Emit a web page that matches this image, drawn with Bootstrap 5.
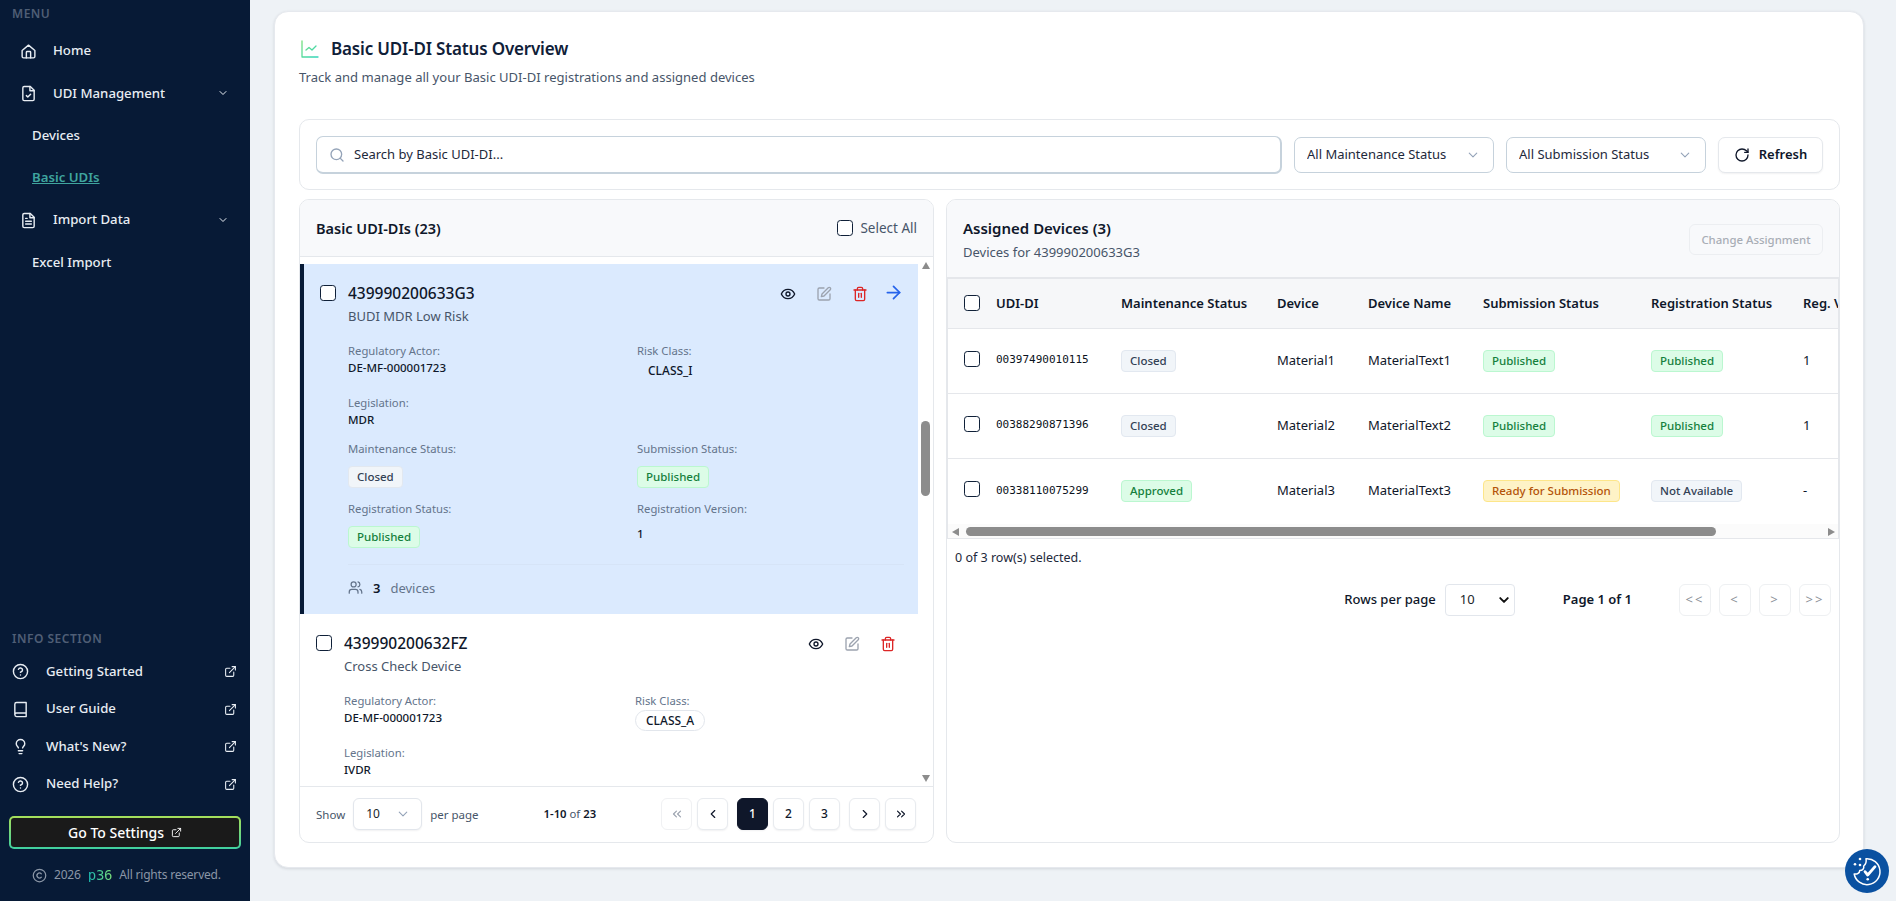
<!DOCTYPE html>
<html lang="en">
<head>
<meta charset="utf-8">
<title>Basic UDI-DI Status Overview</title>
<link href="https://cdn.jsdelivr.net/npm/bootstrap@5.3.0/dist/css/bootstrap.min.css" rel="stylesheet">
<style>
html,body{height:901px;overflow:hidden}
body{font-family:"Noto Sans","Open Sans",sans-serif;background:#eef2f6;color:#0f172a;font-size:13px}
svg.ic{fill:none;stroke:currentColor;stroke-width:2;stroke-linecap:round;stroke-linejoin:round;flex:none}
.app-shell{height:901px}
.side-bar{width:250px;background:#071a36;color:#e8edf3;flex:none}
.side-label{font-size:12px;font-weight:600;letter-spacing:.5px;color:#4f5e75;padding-left:12px;line-height:26px;height:26px}
.menu-label{margin-top:1px}
.side-menu{margin-top:3px}
.side-row{height:42.3px;padding:0 21px 0 20px;gap:16px;color:#e8edf3;text-decoration:none;font-size:13.2px;font-weight:500}
.side-sub{padding-left:32px}
.side-active{color:#3fa59f;text-decoration:underline;font-weight:600}
.side-chev{margin-left:auto}
.info-list{margin-top:1px}
.info-row{height:37.6px;padding:0 13px 0 12px;gap:17px;color:#e8edf3;text-decoration:none;font-size:13.2px;font-weight:500}
.info-ext{margin-left:auto}
.set-btn{margin:13px 9px 0;width:232px;height:33px;border-radius:5px;border:2px solid transparent;background:linear-gradient(#1a1a1a,#1a1a1a) padding-box,linear-gradient(0deg,#3fd0a0,#a6e05a) border-box;color:#fff;font-size:14px;font-weight:500;padding:0;gap:7px}
.side-foot{height:52px;color:#8b96a6;font-size:12px;letter-spacing:-.2px;gap:7px;padding-left:32px}
.logo-txt{font-weight:400;font-size:14px;background:linear-gradient(90deg,#18b5b0,#7be07a);-webkit-background-clip:text;background-clip:text;color:transparent;font-family:"DejaVu Sans Mono",monospace;line-height:1}
.main-area{padding:11px 32px 0 24px;min-width:0}
.page-card{height:857px;border:1px solid #e6e9ee;border-radius:14px;padding:0 23px 0 24px;box-shadow:0 1px 3px rgba(15,23,42,.12)}
.page-head{height:107px;padding-top:25px}
.page-title{font-size:17px;font-weight:600;letter-spacing:-.17px;line-height:24px;margin:0;gap:12px;color:#0f2038}
.page-sub{font-size:13.05px;line-height:20px;margin-top:6px;color:#475569}
.chart-ic{margin-left:2px}
.filter-card{height:71px;border:1px solid #e5e8ec;border-radius:10px;padding:0 16px;gap:12px;background:#fff}
.search-box{flex:1}
.search-input{height:38px;border:1px solid #c6d2dc;border-width:1px 2px 2px 1px;border-radius:7px;padding-left:37px;font-size:13px;color:#0f172a}
.search-input::placeholder{color:#1e293b;opacity:1}
.search-ic{left:13px;top:11px;color:#94a3b8}
.flt-select{height:36px;border:1px solid #c6d2dc;border-radius:7px;font-size:13px;width:200px;padding:0 0 0 12px;color:#1e293b;--bs-form-select-bg-img:url("data:image/svg+xml,%3csvg xmlns='http://www.w3.org/2000/svg' viewBox='0 0 16 16'%3e%3cpath fill='none' stroke='%2394a3b8' stroke-width='1.5' stroke-linecap='round' stroke-linejoin='round' d='m3 5.5 5 5 5-5'/%3e%3c/svg%3e");background-position:right 12px center}
.refresh-btn{width:105px;height:36px;border:1px solid #e5e8ec;border-radius:7px;font-size:13px;font-weight:600;gap:9px;color:#0f172a;padding:0;box-shadow:0 1px 2px rgba(15,23,42,.06)}
.panes{margin-top:9px;height:644px;gap:12px}
.pane-card{border:1px solid #e5e8ec;border-radius:10px;overflow:hidden;background:#fff}
.pane-left{width:635px;flex:none}
.pane-right{flex:1;min-width:0}
.left-head{height:58px;background:#f8f9fb;border-bottom:1px solid #e5e8ec;padding:0 16px}
.pane-title{font-size:14.5px;font-weight:600;margin:1px 0 0;color:#0f172a}
.sel-all{gap:7px;color:#475569;font-size:13.5px}
.chk{width:16px;height:16px;margin:0;border:1.3px solid #0f2038;border-radius:4px;flex:none}
.list-zone{height:529px}
.list-items{flex:1;min-width:0;padding-top:7px;overflow:hidden}
.udi-item{padding:17px 12px 0 16px;background:#fff}
.udi-selected{height:350px;background:#dbeafe;border-left:4px solid #071a36;padding-right:9px}
.udi-id{font-size:15.5px;font-weight:500;line-height:24px;color:#0f172a;margin-left:12px}
.udi-top{height:24px}
.udi-name{font-size:13px;line-height:18px;margin:2px 0 0 28px;color:#475569}
.detail-grid{display:grid;grid-template-columns:289px 1fr;grid-template-rows:52px 46px 60px 47px;margin:18px 0 0 28px}
.grid-wide{grid-template-columns:291px 1fr}
.lbl{font-size:11.3px;line-height:16px;color:#64748b}
.val{font-size:11.5px;line-height:18px;font-weight:500;color:#0f172a}
.pill-risk{display:inline-block;height:21px;line-height:19px;border-radius:11px;border:1px solid #e2e6ec;padding:0 10px;font-size:12px;font-weight:500;margin-top:1px;color:#0f172a}
.pill-soft{border-color:transparent}
.pill-white{background:#fff}
.st{display:inline-block;height:22px;line-height:20px;padding:0 8px;font-size:11.5px;font-weight:500;border-radius:4px;border:1px solid;white-space:nowrap}
.st-top{margin-top:9px}
.st-green{background:#dcfce7;border-color:#bbf7d0;color:#15803d}
.st-grey{background:#f1f5f9;border-color:#e2e8f0;color:#334155}
.st-amber{background:#fef3c7;border-color:#fde68a;color:#b45309}
.item-rule{border-top:1px solid #d6e4f7;margin:16px 5px 0 28px;height:0}
.dev-line{margin:13px 0 0 28px;font-size:13px;color:#64748b;gap:10px;line-height:20px}
.dev-num{color:#0f172a;font-weight:600}
.act-btn{width:36px;height:24px;background:none;border:0;padding:0;color:#0f172a}
.act-arrow{width:31px}
.act-edit{color:#9ca3af}
.act-del{color:#dc2626}
.act-go{color:#2563eb}
.v-scroll{width:15px;background:#fff;flex:none;height:529px}
.sb-up,.sb-down{width:0;height:0;border-left:4.5px solid transparent;border-right:4.5px solid transparent;margin:0 auto}
.sb-up{border-bottom:7px solid #8c8c8c;margin-top:5px}
.sb-down{border-top:7px solid #8c8c8c;margin-bottom:4px}
.v-track{flex:1;padding-top:152px}
.v-thumb{width:9px;height:75px;background:#8c8c8c;border-radius:5px;margin:0 auto}
.left-foot{height:57px;border-top:1px solid #e5e8ec;padding:0 17px 0 16px;font-size:11.5px;color:#475569}
.per-select{width:69px;height:32px;margin:0 8px;border:1px solid #e2e6ec;border-radius:6px;padding:0 0 0 12px;font-size:12px;background-position:right 10px center;--bs-form-select-bg-img:url("data:image/svg+xml,%3csvg xmlns='http://www.w3.org/2000/svg' viewBox='0 0 16 16'%3e%3cpath fill='none' stroke='%2394a3b8' stroke-width='1.5' stroke-linecap='round' stroke-linejoin='round' d='m3 5.5 5 5 5-5'/%3e%3c/svg%3e");box-shadow:0 1px 2px rgba(15,23,42,.06)}
.range-txt{margin-left:65px;color:#475569;font-size:11.3px}
.range-txt b{font-weight:600;color:#0f172a}
.pg-set{margin-left:auto;gap:5px}
.pg-btn{width:31px;height:32px;padding:0;border:1px solid #e8ebef;border-radius:6px;background:#fff;color:#0f172a;font-size:12px;font-weight:500;box-shadow:0 1px 2px rgba(15,23,42,.06)}
.pg-off{color:#9ca3af;box-shadow:none;border-color:#f0f1f3}
.pg-on,.pg-on:hover{background:#0f172a;color:#fff;border-color:#0f172a}
.pg-gap{margin-left:4px}
.right-head{height:79px;background:#f8f9fb;padding:2px 16px 0;border-bottom:2px solid #e5e7eb}
.right-text{margin-top:-3px}
.right-sub{font-size:13px;color:#475569;line-height:20px;margin-top:2px}
.right-title{line-height:24px;font-size:15px}
.btn.chg-btn:disabled{width:134px;height:31px;border:1px solid #eceef1;border-radius:6px;background:#f8f9fb;color:#a8adb5;font-size:11.4px;font-weight:500;padding:0;opacity:1}
.tbl-wrap{height:260px;border-left:2px solid #e5e7eb;border-right:1px solid #e5e7eb;border-bottom:1px solid #e5e7eb;overflow:hidden;margin-left:-1px}
.tbl-clip{height:245px;overflow:hidden}
.dev-table{width:1013px;table-layout:fixed;font-size:13px;color:#0f172a;margin:0;--bs-table-bg:transparent;--bs-table-border-color:#e5e7eb}
.dev-table th,.dev-table td{padding:0;vertical-align:middle;white-space:nowrap}
.dev-table thead th{height:49px;background:#f6f7f9;font-weight:600;font-size:13px}
.dev-table tbody td{height:65px}
.dev-table tbody tr:last-child td{border-bottom:0}
.chk-cell{padding-left:16px!important}
.chk-cell .chk{display:block}
.row-chk{position:relative;top:-2px}
.mono{font-family:"DejaVu Sans Mono",monospace;font-size:11px;color:#0b1220}
.h-scroll{height:15px;background:#fbfbfb;padding:0 3px 0 4px}
.sb-left,.sb-right{width:0;height:0;border-top:4.5px solid transparent;border-bottom:4.5px solid transparent;flex:none}
.sb-left{border-right:7px solid #8c8c8c}
.sb-right{border-left:7px solid #8c8c8c;margin-left:auto}
.h-thumb{width:750px;height:9px;background:#8c8c8c;border-radius:5px;margin-left:7px}
.sel-count{font-size:12.5px;padding:9px 0 0 8px;line-height:20px;color:#1e293b}
.tbl-pager{padding:16px 8px 0 0;font-size:13px;font-weight:500;color:#0f172a}
.rows-select{width:70px;height:32px;margin:0 48px 0 9px;padding:0 0 0 14px;border:1px solid #e2e6ec;border-radius:4px;font-size:13px;background-position:right 4px center;background-size:12px;--bs-form-select-bg-img:url("data:image/svg+xml,%3csvg xmlns='http://www.w3.org/2000/svg' viewBox='0 0 16 16'%3e%3cpath fill='none' stroke='%23111' stroke-width='2.6' stroke-linecap='round' stroke-linejoin='round' d='m3 5.5 5 5 5-5'/%3e%3c/svg%3e")}
.pg-page{margin-right:47px;font-weight:600}
.tbl-pg{gap:8px}
.tbl-pg .pg-btn{width:32px;color:#8b9097;box-shadow:none;border-color:#eef0f2;font-weight:400;font-size:13px;letter-spacing:2px}
.cookie-fab{position:fixed;left:1845px;top:849px;width:44px;height:44px}
</style>
</head>
<body>
<svg width="0" height="0" class="position-absolute">
<defs>
<symbol id="i-home" viewBox="0 0 24 24"><path d="M3 10.5 12 3l9 7.5V19a2 2 0 0 1-2 2H5a2 2 0 0 1-2-2z"/><path d="M9 21v-8a1 1 0 0 1 1-1h4a1 1 0 0 1 1 1v8"/></symbol>
<symbol id="i-filecheck" viewBox="0 0 24 24"><path d="M14.5 2H6a2 2 0 0 0-2 2v16a2 2 0 0 0 2 2h12a2 2 0 0 0 2-2V7.5L14.5 2z"/><path d="M14 2v6h6"/><path d="m9 15 2 2 4-4"/></symbol>
<symbol id="i-filetext" viewBox="0 0 24 24"><path d="M14.5 2H6a2 2 0 0 0-2 2v16a2 2 0 0 0 2 2h12a2 2 0 0 0 2-2V7.5L14.5 2z"/><path d="M14 2v6h6"/><path d="M16 13H8"/><path d="M16 17H8"/><path d="M10 9H8"/></symbol>
<symbol id="i-chev" viewBox="0 0 24 24"><path d="m6 9 6 6 6-6"/></symbol>
<symbol id="i-help" viewBox="0 0 24 24"><circle cx="12" cy="12" r="10"/><path d="M9.09 9a3 3 0 0 1 5.83 1c0 2-3 3-3 3"/><path d="M12 17h.01"/></symbol>
<symbol id="i-ext" viewBox="0 0 24 24"><path d="M18 13v6a2 2 0 0 1-2 2H5a2 2 0 0 1-2-2V8a2 2 0 0 1 2-2h6"/><path d="M15 3h6v6"/><path d="M10 14 21 3"/></symbol>
<symbol id="i-book" viewBox="0 0 24 24"><path d="M4 19.500v-15A2.500 2.500 0 0 1 6.500 2H20v20H6.500a2.500 2.500 0 0 1 0-5H20"/></symbol>
<symbol id="i-bulb" viewBox="0 0 24 24"><path d="M15 14c.2-1 .7-1.700 1.500-2.500 1-.9 1.500-2.200 1.500-3.500A6 6 0 0 0 6 8c0 1 .2 2.200 1.500 3.500.7.7 1.300 1.500 1.500 2.500"/><path d="M9 18h6"/><path d="M10 22h4"/></symbol>
<symbol id="i-copy" viewBox="0 0 24 24"><circle cx="12" cy="12" r="10"/><path d="M14.830 14.830a4 4 0 1 1 0-5.660"/></symbol>
<symbol id="i-search" viewBox="0 0 24 24"><circle cx="11" cy="11" r="8"/><path d="m21 21-4.300-4.300"/></symbol>
<symbol id="i-refresh" viewBox="0 0 24 24"><path d="M21 12a9 9 0 1 1-9-9c2.520 0 4.930 1 6.740 2.740L21 8"/><path d="M21 3v5h-5"/></symbol>
<symbol id="i-eye" viewBox="0 0 24 24"><path d="M2 12s3-7 10-7 10 7 10 7-3 7-10 7-10-7-10-7Z"/><circle cx="12" cy="12" r="3"/></symbol>
<symbol id="i-edit" viewBox="0 0 24 24"><path d="M12 3H5a2 2 0 0 0-2 2v14a2 2 0 0 0 2 2h14a2 2 0 0 0 2-2v-7"/><path d="M18.375 2.625a2.121 2.121 0 1 1 3 3L12 15l-4 1 1-4Z"/></symbol>
<symbol id="i-trash" viewBox="0 0 24 24"><path d="M3 6h18"/><path d="M19 6v14c0 1-1 2-2 2H7c-1 0-2-1-2-2V6"/><path d="M8 6V4c0-1 1-2 2-2h4c1 0 2 1 2 2v2"/><path d="M10 11v6"/><path d="M14 11v6"/></symbol>
<symbol id="i-arrow" viewBox="0 0 24 24"><path d="M5 12h14"/><path d="m12 5 7 7-7 7"/></symbol>
<symbol id="i-users" viewBox="0 0 24 24"><path d="M16 21v-2a4 4 0 0 0-4-4H6a4 4 0 0 0-4 4v2"/><circle cx="9" cy="7" r="4"/><path d="M22 21v-2a4 4 0 0 0-3-3.870"/><path d="M16 3.130a4 4 0 0 1 0 7.750"/></symbol>
<symbol id="i-dl" viewBox="0 0 24 24"><path d="m11 17-5-5 5-5"/><path d="m18 17-5-5 5-5"/></symbol>
<symbol id="i-dr" viewBox="0 0 24 24"><path d="m6 17 5-5-5-5"/><path d="m13 17 5-5-5-5"/></symbol>
<symbol id="i-l" viewBox="0 0 24 24"><path d="m15 18-6-6 6-6"/></symbol>
<symbol id="i-r" viewBox="0 0 24 24"><path d="m9 18 6-6-6-6"/></symbol>
<linearGradient id="g-chart" gradientUnits="userSpaceOnUse" x1="0" y1="0" x2="18" y2="18"><stop offset="0" stop-color="#7be07a"/><stop offset="1" stop-color="#2dd4bf"/></linearGradient>
</defs>
</svg>

<div class="app-shell d-flex">
  <aside class="side-bar d-flex flex-column">
    <div class="side-label menu-label">MENU</div>
    <nav class="side-menu d-flex flex-column">
      <a class="side-row d-flex align-items-center" href="#"><svg class="ic" width="17" height="17"><use href="#i-home"/></svg>Home</a>
      <a class="side-row d-flex align-items-center" href="#"><svg class="ic" width="17" height="17"><use href="#i-filecheck"/></svg>UDI Management<svg class="ic side-chev" width="12" height="12"><use href="#i-chev"/></svg></a>
      <a class="side-row side-sub d-flex align-items-center" href="#">Devices</a>
      <a class="side-row side-sub d-flex align-items-center" href="#"><span class="side-active">Basic UDIs</span></a>
      <a class="side-row d-flex align-items-center" href="#"><svg class="ic" width="17" height="17"><use href="#i-filetext"/></svg>Import Data<svg class="ic side-chev" width="12" height="12"><use href="#i-chev"/></svg></a>
      <a class="side-row side-sub d-flex align-items-center" href="#">Excel Import</a>
    </nav>
    <div class="mt-auto">
      <div class="side-label">INFO SECTION</div>
      <div class="info-list">
        <a class="info-row d-flex align-items-center" href="#"><svg class="ic" width="17" height="17"><use href="#i-help"/></svg>Getting Started<svg class="ic info-ext" width="13" height="13"><use href="#i-ext"/></svg></a>
        <a class="info-row d-flex align-items-center" href="#"><svg class="ic" width="17" height="17"><use href="#i-book"/></svg>User Guide<svg class="ic info-ext" width="13" height="13"><use href="#i-ext"/></svg></a>
        <a class="info-row d-flex align-items-center" href="#"><svg class="ic" width="17" height="17"><use href="#i-bulb"/></svg>What's New?<svg class="ic info-ext" width="13" height="13"><use href="#i-ext"/></svg></a>
        <a class="info-row d-flex align-items-center" href="#"><svg class="ic" width="17" height="17"><use href="#i-help"/></svg>Need Help?<svg class="ic info-ext" width="13" height="13"><use href="#i-ext"/></svg></a>
      </div>
      <button class="btn set-btn d-flex align-items-center justify-content-center" type="button">Go To Settings<svg class="ic" width="11" height="11"><use href="#i-ext"/></svg></button>
      <div class="side-foot d-flex align-items-center"><svg class="ic" width="15" height="15"><use href="#i-copy"/></svg><span>2026</span><span class="logo-txt">p36</span><span>All rights reserved.</span></div>
    </div>
  </aside>

  <main class="main-area flex-grow-1">
    <div class="page-card bg-white">
      <header class="page-head">
        <h1 class="page-title d-flex align-items-center"><svg class="chart-ic" width="18" height="18" viewBox="0 0 18 18" fill="none" stroke="url(#g-chart)" stroke-width="1.300" stroke-linecap="round" stroke-linejoin="round"><path d="M1 1v16h16"/><path d="m15 6-4 4-3-2.500-3 2.500"/></svg>Basic UDI-DI Status Overview</h1>
        <p class="page-sub mb-0">Track and manage all your Basic UDI-DI registrations and assigned devices</p>
      </header>

      <section class="filter-card d-flex align-items-center">
        <div class="search-box position-relative">
          <svg class="ic search-ic position-absolute" width="16" height="16"><use href="#i-search"/></svg>
          <input class="form-control search-input" type="text" placeholder="Search by Basic UDI-DI...">
        </div>
        <select class="form-select flt-select"><option>All Maintenance Status</option></select>
        <select class="form-select flt-select"><option>All Submission Status</option></select>
        <button class="btn refresh-btn d-flex align-items-center justify-content-center bg-white" type="button"><svg class="ic" width="16" height="16"><use href="#i-refresh"/></svg>Refresh</button>
      </section>

      <div class="panes d-flex">
        <section class="pane-card pane-left d-flex flex-column">
          <div class="left-head d-flex align-items-center justify-content-between">
            <h2 class="pane-title">Basic UDI-DIs (23)</h2>
            <label class="sel-all d-flex align-items-center"><input class="form-check-input chk" type="checkbox">Select All</label>
          </div>
          <div class="list-zone d-flex">
            <div class="list-items">
              <article class="udi-item udi-selected">
                <div class="udi-top d-flex align-items-center">
                  <input class="form-check-input chk" type="checkbox">
                  <span class="udi-id">439990200633G3</span>
                  <div class="ms-auto d-flex align-items-center">
                    <button class="act-btn" type="button"><svg class="ic" width="16" height="16"><use href="#i-eye"/></svg></button>
                    <button class="act-btn act-edit" type="button"><svg class="ic" width="16" height="16"><use href="#i-edit"/></svg></button>
                    <button class="act-btn act-del" type="button"><svg class="ic" width="16" height="16"><use href="#i-trash"/></svg></button>
                    <button class="act-btn act-arrow act-go" type="button"><svg class="ic" width="21" height="21"><use href="#i-arrow"/></svg></button>
                  </div>
                </div>
                <div class="udi-name">BUDI MDR Low Risk</div>
                <div class="detail-grid">
                  <div><div class="lbl">Regulatory Actor:</div><div class="val">DE-MF-000001723</div></div>
                  <div><div class="lbl">Risk Class:</div><span class="pill-risk pill-soft">CLASS_I</span></div>
                  <div><div class="lbl">Legislation:</div><div class="val">MDR</div></div>
                  <div></div>
                  <div><div class="lbl">Maintenance Status:</div><span class="st st-top st-grey">Closed</span></div>
                  <div><div class="lbl">Submission Status:</div><span class="st st-top st-green">Published</span></div>
                  <div><div class="lbl">Registration Status:</div><span class="st st-top st-green">Published</span></div>
                  <div><div class="lbl">Registration Version:</div><div class="val mt-2">1</div></div>
                </div>
                <div class="item-rule"></div>
                <div class="dev-line d-flex align-items-center"><svg class="ic" width="15" height="15"><use href="#i-users"/></svg><span class="dev-num">3</span><span>devices</span></div>
              </article>
              <article class="udi-item">
                <div class="udi-top d-flex align-items-center">
                  <input class="form-check-input chk" type="checkbox">
                  <span class="udi-id">439990200632FZ</span>
                  <div class="ms-auto d-flex align-items-center">
                    <button class="act-btn" type="button"><svg class="ic" width="16" height="16"><use href="#i-eye"/></svg></button>
                    <button class="act-btn act-edit" type="button"><svg class="ic" width="16" height="16"><use href="#i-edit"/></svg></button>
                    <button class="act-btn act-del" type="button"><svg class="ic" width="16" height="16"><use href="#i-trash"/></svg></button>
                  </div>
                </div>
                <div class="udi-name">Cross Check Device</div>
                <div class="detail-grid grid-wide">
                  <div><div class="lbl">Regulatory Actor:</div><div class="val">DE-MF-000001723</div></div>
                  <div><div class="lbl">Risk Class:</div><span class="pill-risk pill-white">CLASS_A</span></div>
                  <div><div class="lbl">Legislation:</div><div class="val">IVDR</div></div>
                  <div></div>
                </div>
              </article>
            </div>
            <div class="v-scroll d-flex flex-column">
              <div class="sb-up"></div>
              <div class="v-track"><div class="v-thumb"></div></div>
              <div class="sb-down"></div>
            </div>
          </div>
          <div class="left-foot d-flex align-items-center">
            <span>Show</span>
            <select class="form-select per-select"><option>10</option></select>
            <span>per page</span>
            <span class="range-txt"><b>1-10</b> of <b>23</b></span>
            <div class="pg-set d-flex">
              <button class="btn pg-btn pg-off d-flex align-items-center justify-content-center" type="button"><svg class="ic" width="14" height="14"><use href="#i-dl"/></svg></button>
              <button class="btn pg-btn d-flex align-items-center justify-content-center" type="button"><svg class="ic" width="14" height="14"><use href="#i-l"/></svg></button>
              <button class="btn pg-btn pg-on pg-gap" type="button">1</button>
              <button class="btn pg-btn" type="button">2</button>
              <button class="btn pg-btn" type="button">3</button>
              <button class="btn pg-btn pg-gap d-flex align-items-center justify-content-center" type="button"><svg class="ic" width="14" height="14"><use href="#i-r"/></svg></button>
              <button class="btn pg-btn d-flex align-items-center justify-content-center" type="button"><svg class="ic" width="14" height="14"><use href="#i-dr"/></svg></button>
            </div>
          </div>
        </section>

        <section class="pane-card pane-right d-flex flex-column">
          <div class="right-head d-flex align-items-center justify-content-between">
            <div class="right-text">
              <h2 class="pane-title right-title">Assigned Devices (3)</h2>
              <div class="right-sub">Devices for 439990200633G3</div>
            </div>
            <button class="btn chg-btn" type="button" disabled>Change Assignment</button>
          </div>
          <div class="tbl-wrap">
            <div class="tbl-clip">
              <table class="table dev-table">
                <colgroup><col style="width:48px"><col style="width:125px"><col style="width:156px"><col style="width:91px"><col style="width:115px"><col style="width:168px"><col style="width:152px"><col style="width:158px"></colgroup>
                <thead><tr>
                  <th class="chk-cell"><input class="form-check-input chk" type="checkbox"></th>
                  <th>UDI-DI</th><th>Maintenance Status</th><th>Device</th><th>Device Name</th><th>Submission Status</th><th>Registration Status</th><th>Reg. Version</th>
                </tr></thead>
                <tbody>
                  <tr><td class="chk-cell"><input class="form-check-input chk row-chk" type="checkbox"></td><td class="mono">00397490010115</td><td><span class="st st-grey">Closed</span></td><td>Material1</td><td>MaterialText1</td><td><span class="st st-green">Published</span></td><td><span class="st st-green">Published</span></td><td>1</td></tr>
                  <tr><td class="chk-cell"><input class="form-check-input chk row-chk" type="checkbox"></td><td class="mono">00388290871396</td><td><span class="st st-grey">Closed</span></td><td>Material2</td><td>MaterialText2</td><td><span class="st st-green">Published</span></td><td><span class="st st-green">Published</span></td><td>1</td></tr>
                  <tr><td class="chk-cell"><input class="form-check-input chk row-chk" type="checkbox"></td><td class="mono">00338110075299</td><td><span class="st st-green">Approved</span></td><td>Material3</td><td>MaterialText3</td><td><span class="st st-amber">Ready for Submission</span></td><td><span class="st st-grey">Not Available</span></td><td>-</td></tr>
                </tbody>
              </table>
            </div>
            <div class="h-scroll d-flex align-items-center">
              <div class="sb-left"></div><div class="h-thumb"></div><div class="sb-right"></div>
            </div>
          </div>
          <div class="sel-count">0 of 3 row(s) selected.</div>
          <div class="tbl-pager d-flex align-items-center justify-content-end">
            <span>Rows per page</span>
            <select class="form-select rows-select"><option>10</option></select>
            <span class="pg-page">Page 1 of 1</span>
            <div class="tbl-pg d-flex">
              <button class="btn pg-btn" type="button">&lt;&lt;</button>
              <button class="btn pg-btn" type="button">&lt;</button>
              <button class="btn pg-btn" type="button">&gt;</button>
              <button class="btn pg-btn" type="button">&gt;&gt;</button>
            </div>
          </div>
        </section>
      </div>
    </div>
  </main>
</div>

<svg class="cookie-fab" viewBox="0 0 44 44" fill="none" stroke="#fff" stroke-width="1.500" stroke-linecap="round" stroke-linejoin="round" role="img" aria-label="Cookie settings">
  <circle cx="22" cy="22" r="22" fill="#0a51a1" stroke="none"/>
  <path d="M21 9.700A13 13 0 1 1 9.200 25c3 .5 5.500-1 5.500-3.500 3 0 4.500-2 4-4.500 2-1.500 2.800-4.500 2.300-7.300z"/>
  <path d="m20 22.700 2.700 3.300 7.300-8.300" stroke-width="2.800"/>
  <path d="M22.700 30.300h.01" stroke-width="2.600"/>
  <circle cx="15" cy="10" r="1.300" fill="#fff" stroke="none"/><circle cx="10" cy="15.300" r="1.300" fill="#fff" stroke="none"/><circle cx="15" cy="16" r="1.300" fill="#fff" stroke="none"/>
</svg>
</body>
</html>
